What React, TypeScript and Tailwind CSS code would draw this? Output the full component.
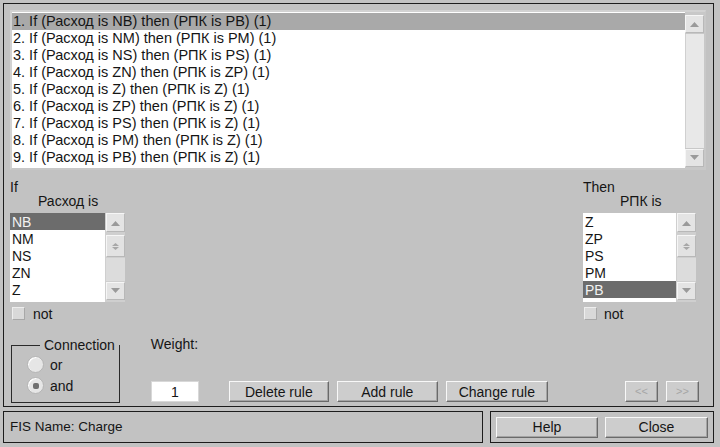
import React from "react";

const rules = [
  "1. If (Расход is NB) then (РПК is PB) (1)",
  "2. If (Расход is NM) then (РПК is PM) (1)",
  "3. If (Расход is NS) then (РПК is PS) (1)",
  "4. If (Расход is ZN) then (РПК is ZP) (1)",
  "5. If (Расход is Z) then (РПК is Z) (1)",
  "6. If (Расход is ZP) then (РПК is Z) (1)",
  "7. If (Расход is PS) then (РПК is Z) (1)",
  "8. If (Расход is PM) then (РПК is Z) (1)",
  "9. If (Расход is PB) then (РПК is Z) (1)",
];

function Arrow({ down }: { down?: boolean }) {
  return (
    <svg width="9" height="6" viewBox="0 0 9 6">
      {down ? (
        <polygon points="0,0 9,0 4.5,5" fill="#9a9a9a" />
      ) : (
        <polygon points="0,6 9,6 4.5,1" fill="#9a9a9a" />
      )}
    </svg>
  );
}

function ScrollBtn({ down, h }: { down?: boolean; h: string }) {
  return (
    <div
      className={`${h} w-full flex items-center justify-center bg-[#e4e4e4] border border-t-[#f6f6f6] border-l-[#f6f6f6] border-r-[#b8b8b8] border-b-[#b8b8b8]`}
    >
      <Arrow down={down} />
    </div>
  );
}

function Btn({ w, children, disabled }: { w: string; children: React.ReactNode; disabled?: boolean }) {
  return (
    <div
      className={`${w} h-[21px] flex items-center justify-center bg-[#cdcdcd] border border-t-[#f8f8f8] border-l-[#f8f8f8] border-r-[#6a6a6a] border-b-[#6a6a6a] shadow-[inset_-1px_-1px_0_#a4a4a4] ${
        disabled ? "text-[#a6a6a6] text-[11px]" : "text-[#151515]"
      }`}
    >
      {children}
    </div>
  );
}

function SmallList({
  items,
  selected,
  listW,
}: {
  items: string[];
  selected: number;
  listW: string;
}) {
  return (
    <div className="flex h-[89px]">
      <div className={`${listW} h-full bg-white overflow-hidden`}>
        {items.map((it, i) => (
          <div
            key={it + i}
            className={`h-[17px] flex items-center pl-[2px] ${
              i === selected ? "bg-[#6c6c6c] text-[#f2f2f2]" : "text-[#151515]"
            }`}
          >
            {it}
          </div>
        ))}
      </div>
      <div className="w-[20px] h-full flex flex-col pl-[1px] bg-[#cfcfcf]">
        <ScrollBtn h="h-[19px]" />
        <div className="mt-[3px] h-[22px] w-full bg-[#e2e2e2] border border-t-[#f6f6f6] border-l-[#f6f6f6] border-r-[#b8b8b8] border-b-[#b8b8b8] flex flex-col items-center justify-center gap-[1px]">
          <svg width="7" height="7" viewBox="0 0 7 7">
            <polygon points="0,3 7,3 3.5,0" fill="#a8a8a8" />
            <polygon points="0,4 7,4 3.5,7" fill="#a8a8a8" />
          </svg>
        </div>
        <div className="flex-1 bg-[#dcdcdc] my-[1px]" />
        <ScrollBtn down h="h-[18px]" />
        <div className="h-[2px]" />
      </div>
    </div>
  );
}

function Check() {
  return (
    <div className="w-[13px] h-[13px] bg-[#d9d9d9] border border-t-[#eeeeee] border-l-[#eeeeee] border-r-[#a8a8a8] border-b-[#a8a8a8]" />
  );
}

function Radio({ on }: { on?: boolean }) {
  return (
    <div className="w-[17px] h-[17px] rounded-full bg-[#e6e6e6] border border-[#b4b4b4] flex items-center justify-center shadow-[inset_1px_1px_0_#ffffff]">
      {on && <div className="w-[6px] h-[6px] rounded-[2px] bg-[#707070]" />}
    </div>
  );
}

export default function App() {
  return (
    <div className="w-[720px] h-[447px] bg-[#c2c2c2] pt-[3px] px-[3px] text-[14px] leading-none text-[#151515] font-['Liberation_Sans',Arial,sans-serif] overflow-hidden">
      <div className="w-[711px] h-[404px] border border-[#1c1c1c] pl-[6px] pr-[7px] pt-[6px] flex flex-col">
        {/* Rules list */}
        <div className="w-[696px] h-[160px] flex bg-white border-t-[2px] border-l-[2px] border-t-[#d2d2d2] border-l-[#d2d2d2] border-r border-b-[2px] border-r-[#c8c8c8] border-b-[#c8c8c8]">
          <div className="flex-1 pt-[1px] text-[14.5px]">
            {rules.map((r, i) => (
              <div
                key={r}
                className={`h-[17px] flex items-center pl-[1px] ${i === 0 ? "bg-[#a9a9a9]" : ""}`}
              >
                {r}
              </div>
            ))}
          </div>
          <div className="w-[20px] flex flex-col bg-[#c8c8c8] pt-[3px] pb-[1px] pr-[1px]">
            <ScrollBtn h="h-[18px]" />
            <div className="flex-1 bg-[#e8e8e8] border-l border-[#d0d0d0] my-[1px]" />
            <ScrollBtn down h="h-[18px]" />
          </div>
        </div>

        {/* If / Then */}
        <div className="flex justify-between mt-[10px]">
          <div className="w-[115px] flex flex-col">
            <div className="h-[13px]">If</div>
            <div className="h-[14px] pl-[28px] mt-[1px]">Расход is</div>
            <div className="mt-[5px]">
              <SmallList items={["NB", "NM", "NS", "ZN", "Z", "ZP"]} selected={0} listW="w-[95px]" />
            </div>
            <div className="flex items-center mt-[4px] pl-[2px] h-[15px] gap-[8px]">
              <Check />
              <span>not</span>
            </div>
          </div>
          <div className="w-[123px] flex flex-col">
            <div className="h-[13px]">Then</div>
            <div className="h-[14px] pl-[37px] mt-[1px]">РПК is</div>
            <div className="mt-[5px]">
              <SmallList items={["Z", "ZP", "PS", "PM", "PB"]} selected={4} listW="w-[93px]" />
            </div>
            <div className="flex items-center mt-[4px] pl-[1px] h-[15px] gap-[7px]">
              <Check />
              <span>not</span>
            </div>
          </div>
        </div>

        {/* Bottom controls */}
        <div className="flex items-end mt-[16px] h-[66px]">
          <fieldset className="w-[108px] h-[65px] border border-[#2a2a2a] pl-[15px] ml-[1px]">
            <legend className="ml-[13px] px-[4px] leading-[14px]">Connection</legend>
            <div className="flex items-center gap-[6px] mt-[4px]">
              <Radio />
              <span>or</span>
            </div>
            <div className="flex items-center gap-[6px] mt-[4px]">
              <Radio on />
              <span>and</span>
            </div>
          </fieldset>
          <div className="ml-[31px] h-full flex flex-col justify-between pb-[1px]">
            <div className="pt-[0px]">Weight:</div>
            <div className="w-[48px] h-[21px] bg-white border border-[#d8d8d8] flex items-center justify-center">
              1
            </div>
          </div>
          <div className="flex gap-[8px] ml-[30px] pb-[1px]">
            <Btn w="w-[100px]">Delete rule</Btn>
            <Btn w="w-[101px]">Add rule</Btn>
            <Btn w="w-[102px]">Change rule</Btn>
          </div>
          <div className="flex gap-[8px] ml-auto mr-[7px] pb-[1px]">
            <Btn w="w-[33px]" disabled>
              &lt;&lt;
            </Btn>
            <Btn w="w-[33px]" disabled>
              &gt;&gt;
            </Btn>
          </div>
        </div>
      </div>

      {/* Status bar */}
      <div className="flex gap-[7px] mt-[4px]">
        <div className="w-[480px] h-[32px] border border-[#1c1c1c] flex items-center pl-[6px] text-[13.5px]">
          FIS Name: Charge
        </div>
        <div className="w-[224px] h-[32px] border border-[#1c1c1c] flex items-center pl-[5px] gap-[7px]">
          <Btn w="w-[102px]">Help</Btn>
          <Btn w="w-[103px]">Close</Btn>
        </div>
      </div>
    </div>
  );
}
